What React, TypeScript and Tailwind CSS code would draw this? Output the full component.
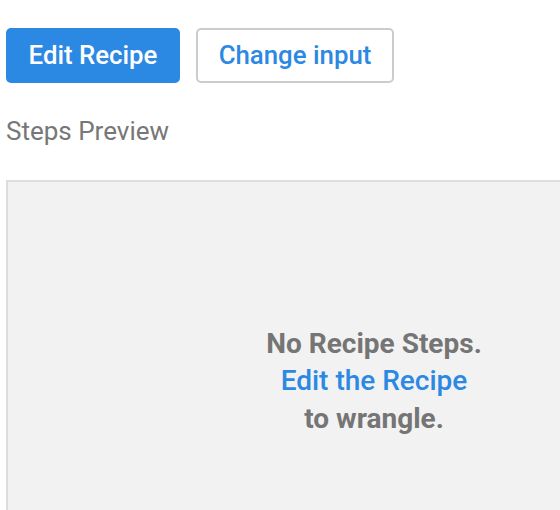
import React from "react";

export default function App() {
  return (
    <div className="w-[560px] h-[510px] overflow-hidden bg-white" style={{ fontFamily: "Roboto, 'Liberation Sans', sans-serif" }}>
      <div className="pl-[6px] pt-[28px]">
        <div className="flex gap-[16px]">
          <button className="h-[55px] w-[174px] rounded-[5px] bg-[#2b89e3] text-white text-[25.8px] font-medium">
            Edit Recipe
          </button>
          <button className="h-[55px] w-[198px] rounded-[5px] border-2 border-[#cccccc] bg-white text-[#2b89e3] text-[25.8px] font-medium">
            Change input
          </button>
        </div>
        <div className="mt-[33px] text-[26px] leading-[30px] text-[#777777]">Steps Preview</div>
        <div className="mt-[34px] w-[736px] h-[402px] border-2 border-[#dddddd] bg-[#f2f2f2] flex flex-col items-center justify-center text-center text-[28px] leading-[37.5px] font-bold text-[#757575]">
          <div>No Recipe Steps.</div>
          <div className="text-[#2b89e3] font-medium">Edit the Recipe</div>
          <div>to wrangle.</div>
        </div>
      </div>
    </div>
  );
}
